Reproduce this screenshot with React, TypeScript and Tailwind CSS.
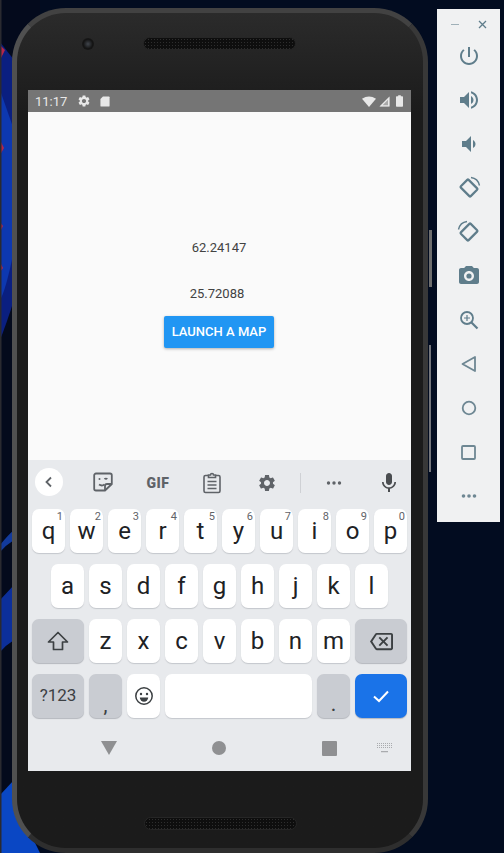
import React from 'react'

const FONT = "font-['Roboto','Liberation_Sans',sans-serif]"

const GEAR =
  'M19.14 12.94c.04-.3.06-.61.06-.94 0-.32-.02-.64-.07-.94l2.03-1.58c.18-.14.23-.41.12-.61l-1.92-3.32c-.12-.22-.37-.29-.59-.22l-2.39.96c-.5-.38-1.03-.7-1.62-.94l-.36-2.54c-.04-.24-.24-.41-.48-.41h-3.84c-.24 0-.43.17-.47.41l-.36 2.54c-.59.24-1.13.57-1.62.94l-2.39-.96c-.22-.08-.47 0-.59.22L2.74 8.87c-.12.21-.08.47.12.61l2.03 1.58c-.05.3-.09.63-.09.94s.02.64.07.94l-2.03 1.58c-.18.14-.23.41-.12.61l1.92 3.32c.12.22.37.29.59.22l2.39-.96c.5.38 1.03.7 1.62.94l.36 2.54c.05.24.24.41.48.41h3.84c.24 0 .44-.17.47-.41l.36-2.54c.59-.24 1.13-.56 1.62-.94l2.39.96c.22.08.47 0 .59-.22l1.92-3.32c.12-.22.07-.47-.12-.61l-2.01-1.58zM12 15.6c-1.98 0-3.6-1.62-3.6-3.6s1.62-3.6 3.6-3.6 3.6 1.62 3.6 3.6-1.62 3.6-3.6 3.6z'

const Icon = ({ d, size = 24, className = '' }: { d: string; size?: number; className?: string }) => (
  <svg width={size} height={size} viewBox="0 0 24 24" fill="currentColor" fillRule="evenodd" className={className}>
    <path d={d} />
  </svg>
)

const Key = ({ label, num }: { label: string; num?: string }) => (
  <div className="relative flex-1 h-[44px] bg-white rounded-[7px] shadow-[0_1px_1px_#c4c7cc] flex items-center justify-center text-[24px] leading-none text-[#202124]">
    {label}
    {num && <span className="absolute top-[1px] right-[2px] text-[11px] leading-[13px] text-[#5f6368]">{num}</span>}
  </div>
)

const FnKey = ({ children, w }: { children: React.ReactNode; w: string }) => (
  <div className={`${w} h-[44px] shrink-0 bg-[#c9ccd2] rounded-[7px] shadow-[0_1px_1px_#b4b7bd] flex items-center justify-center text-[#3c4043]`}>
    {children}
  </div>
)

const SideBtn = ({ children }: { children: React.ReactNode }) => (
  <div className="h-[44px] flex items-center justify-center text-[#5f7d8b]">{children}</div>
)

const Speaker = () => (
  <div className="w-[153px] h-[13px] rounded-full bg-[#0e0e0e] bg-[radial-gradient(#2e2e2e_0.7px,transparent_0.8px)] bg-[length:3px_3px] border border-[#262626]" />
)

const App = () => {
  return (
    <div className={`relative w-[504px] h-[853px] overflow-hidden bg-[#020c20] flex items-start pl-[12px] pt-[8px] ${FONT}`}>
      {/* Desktop wallpaper behind the emulator */}
      <svg className="absolute left-0 top-0" width="40" height="853" viewBox="0 0 40 853">
        <rect width="40" height="853" fill="#040a1c" />
        <path d="M0 42 L14 60 L14 300 Q6 325 0 340 Z" fill="#0a1f80" />
        <path d="M0 90 L14 130 L14 250 Q6 290 0 300 Z" fill="#0d38b0" />
        <path d="M0 45 L5 50 L0 60 Z M0 140 L4 148 L0 155 Z M0 222 L3 226 L0 232 Z M0 262 L3 268 L0 272 Z" fill="#b5264a" />
        <path d="M0 545 Q8 535 14 530 L14 540 Q6 545 0 552 Z" fill="#123a9c" />
        <path d="M0 600 L14 585 L14 640 Q6 645 0 652 Z" fill="#0c2f9a" />
        <path d="M0 795 L14 780 L14 853 L0 853 Z" fill="#0a47c4" />
        <path d="M14 800 L40 853 L14 853 Z" fill="#0a47c4" />
        <rect width="1.5" height="853" fill="#2a2a30" />
      </svg>

      {/* Phone side buttons */}
      <div className="absolute left-[429px] top-[230px] w-[3px] h-[57px] bg-[#6e6e6e]" />
      <div className="absolute left-[429px] top-[345px] w-[2px] h-[127px] bg-[#74767c]" />

      {/* Phone */}
      <div className="relative shrink-0 w-[416px] h-[845px] rounded-[54px] border-[5px] border-l-[#505050] border-r-[#383838] border-t-[#424242] border-b-[#2e2e2e] bg-[#1c1c1c] bg-gradient-to-b from-[#2b2b2b] to-[#1b1b1b] to-[12%] flex flex-col pl-[11px]">
        <div className="h-[77px] shrink-0 flex items-start pt-[24px]">
          <div className="w-[12px] h-[12px] mt-[1px] ml-[54px] mr-[49px] rounded-full bg-[radial-gradient(#3a3e44_8%,#141414_55%,#1c1c1c)]" />
          <Speaker />
        </div>

        <div className="w-[383px] h-[681px] shrink-0 flex flex-col bg-[#fafafa]">
          {/* Status bar */}
          <div className="h-[22px] shrink-0 bg-[#757575] flex items-center pl-[7px] pr-[8px] text-[#e8e8e8]">
            <span className="text-[13px] leading-none">11:17</span>
            <Icon d={GEAR} size={14} className="ml-[10px]" />
            <svg width="10" height="11" viewBox="0 0 12 13" fill="currentColor" className="ml-[9px]">
              <path d="M3.5 0.5H10.5a1 1 0 0 1 1 1V11.5a1 1 0 0 1-1 1H1.5a1 1 0 0 1-1-1V3.5Z" />
            </svg>
            <div className="flex-1" />
            <svg width="14" height="11" viewBox="0 0 14 11" fill="currentColor">
              <path d="M0 2.8 Q7 -1.8 14 2.8 L7 11 Z" />
            </svg>
            <svg width="12" height="11" viewBox="0 0 12 11" fill="none" className="ml-[2px]">
              <path d="M11.5 0.5V10.5H1.5Z" fill="#a8a8a8" />
              <path d="M11.5 0.5V10.5H1.5ZM10 3.8V9.2H4.6Z" fill="currentColor" fillRule="evenodd" />
            </svg>
            <svg width="7" height="12" viewBox="0 0 8 13" fill="currentColor" className="ml-[6px]">
              <path d="M2.5 0H5.5V1.2H7.2a.8.8 0 0 1 .8.8V12.2a.8.8 0 0 1-.8.8H.8a.8.8 0 0 1-.8-.8V2a.8.8 0 0 1 .8-.8H2.5Z" />
            </svg>
          </div>

          {/* App content */}
          <div className="h-[348px] shrink-0 flex flex-col items-center pt-[126px] pr-[1px] text-[13px] leading-[20px] text-[#424242]">
            <span>62.24147</span>
            <span className="mt-[26px] mr-[4px]">25.72088</span>
            <button className="mt-[12px] w-[110px] h-[32px] rounded-[2px] bg-[#2196f3] text-white text-[13px] font-medium shadow-[0_1px_3px_rgba(0,0,0,0.3)]">
              LAUNCH A MAP
            </button>
          </div>

          {/* Keyboard */}
          <div className="flex-1 bg-[#e8eaed] flex flex-col px-[4px]">
            <div className="h-[49px] shrink-0 relative text-[#5f6368]">
              <div className="absolute left-[3px] top-[8px] w-[28px] h-[28px] rounded-full bg-white flex items-center justify-center">
                <svg width="12" height="12" viewBox="0 0 12 12" fill="none" stroke="#5f6368" strokeWidth="1.8">
                  <path d="M8 1.5 3.5 6 8 10.5" />
                </svg>
              </div>
              <div className="flex h-full items-center pl-[60px] pb-[4px]">
                <svg width="22" height="22" viewBox="0 0 22 22" fill="none" stroke="currentColor" strokeWidth="1.8" className="-mt-[1px]">
                  <path d="M4 2.5H18a1.8 1.8 0 0 1 1.8 1.8V13L13 19.5H4a1.8 1.8 0 0 1-1.8-1.8V4.3A1.8 1.8 0 0 1 4 2.5Z" />
                  <path d="M13 19.5V15a2 2 0 0 1 2-2h4.8" />
                  <path d="M7 13.5c2 1.3 4 1.2 5.5-.2" />
                  <circle cx="7.5" cy="8" r="1" fill="currentColor" stroke="none" />
                  <path d="M12.5 8.2c.8-.9 2-.9 2.8 0" />
                </svg>
                <span className="ml-[31px] w-[26px] text-center text-[14px] font-black tracking-[0.6px] leading-none">GIF</span>
                <svg width="20" height="22" viewBox="0 0 20 22" fill="none" stroke="currentColor" strokeWidth="1.6" className="ml-[31px]">
                  <path d="M6 3.5H3.5a1.5 1.5 0 0 0-1.5 1.5V19a1.5 1.5 0 0 0 1.5 1.5H16.5A1.5 1.5 0 0 0 18 19V5a1.5 1.5 0 0 0-1.5-1.5H14" />
                  <path d="M6.5 5.5V3h2a1.5 1.5 0 0 1 3 0h2v2.5Z" />
                  <path d="M5.5 9.5h9M5.5 13h9M5.5 16.5h9" />
                </svg>
                <Icon d={GEAR} size={20} className="ml-[35px]" />
                <div className="ml-[23px] w-px h-[20px] bg-[#cfd1d5]" />
                <svg width="16" height="4" viewBox="0 0 16 4" fill="currentColor" className="ml-[25px]">
                  <circle cx="2.5" cy="2" r="1.7" />
                  <circle cx="8" cy="2" r="1.7" />
                  <circle cx="13.5" cy="2" r="1.7" />
                </svg>
                <Icon d="M12 14c1.66 0 3-1.34 3-3V5c0-1.66-1.34-3-3-3S9 3.34 9 5v6c0 1.66 1.34 3 3 3zm5.3-3c0 3-2.54 5.3-5.3 5.3S6.7 14 6.7 11H5c0 3.41 2.72 6.23 6 6.72V21h2v-3.28c3.28-.48 6-3.3 6-6.72h-1.7z" size={24} className="ml-[35px] text-[#4a4d50]" />
              </div>
            </div>

            <div className="flex flex-col gap-[11px]">
              <div className="flex gap-[5px]">
                {'qwertyuiop'.split('').map((c, i) => (
                  <Key key={c} label={c} num={String((i + 1) % 10)} />
                ))}
              </div>
              <div className="flex gap-[5px] px-[19px]">
                {'asdfghjkl'.split('').map(c => (
                  <Key key={c} label={c} />
                ))}
              </div>
              <div className="flex gap-[5px]">
                <FnKey w="w-[52px]">
                  <svg width="22" height="22" viewBox="0 0 22 22" fill="none" stroke="#3c4043" strokeWidth="1.7" strokeLinejoin="round">
                    <path d="M11 2.5 20.5 12H15.5V19.5H6.5V12H1.5Z" />
                  </svg>
                </FnKey>
                {'zxcvbnm'.split('').map(c => (
                  <Key key={c} label={c} />
                ))}
                <FnKey w="w-[52px]">
                  <Icon d="M22 3H7c-.69 0-1.23.35-1.59.88L0 12l5.41 8.11c.36.53.9.89 1.59.89h15c1.1 0 2-.9 2-2V5c0-1.1-.9-2-2-2zm0 16H7.07L2.4 12l4.66-7H22v14zM10.41 17L14 13.41 17.59 17 19 15.59 15.41 12 19 8.41 17.59 7 14 10.59 10.41 7 9 8.41 12.59 12 9 15.59z" size={23} />
                </FnKey>
              </div>
              <div className="flex gap-[5px]">
                <FnKey w="w-[52px]">
                  <span className="text-[17px]">?123</span>
                </FnKey>
                <FnKey w="w-[33px]">
                  <span className="text-[18px] font-medium leading-none mt-[20px]">,</span>
                </FnKey>
                <div className="w-[33px] h-[44px] shrink-0 bg-white rounded-[7px] shadow-[0_1px_1px_#c4c7cc] flex items-center justify-center">
                  <svg width="20" height="20" viewBox="0 0 20 20" fill="none" stroke="#3c4043" strokeWidth="1.5">
                    <circle cx="10" cy="10" r="8.2" />
                    <circle cx="7" cy="8" r="1.2" fill="#3c4043" stroke="none" />
                    <circle cx="13" cy="8" r="1.2" fill="#3c4043" stroke="none" />
                    <path d="M5.8 11.5h8.4a4.2 4.2 0 0 1-8.4 0Z" fill="#3c4043" stroke="none" />
                  </svg>
                </div>
                <div className="flex-1 h-[44px] bg-white rounded-[7px] shadow-[0_1px_1px_#c4c7cc]" />
                <FnKey w="w-[33px]">
                  <span className="text-[18px] font-medium leading-none mt-[18px]">.</span>
                </FnKey>
                <div className="w-[52px] h-[44px] shrink-0 bg-[#1a73e8] rounded-[7px] shadow-[0_1px_1px_#b4b7bd] flex items-center justify-center">
                  <svg width="18" height="18" viewBox="0 0 18 18" fill="none" stroke="white" strokeWidth="2">
                    <path d="M2 9.5 7 14 16 4.5" />
                  </svg>
                </div>
              </div>
            </div>

            {/* Navigation bar */}
            <div className="flex-1 flex items-center pt-[7px] text-[#8f9092]">
              <svg width="16" height="14" viewBox="0 0 16 14" fill="currentColor" className="ml-[69px]">
                <path d="M0 0H16L8 14Z" />
              </svg>
              <div className="ml-[95px] w-[14px] h-[14px] rounded-full bg-[#8f9092]" />
              <div className="ml-[96px] w-[15px] h-[15px] bg-[#8f9092] rounded-[1px]" />
              <svg width="15" height="10" viewBox="0 0 15 10" fill="#a9abae" className="ml-[40px]">
                <path d="M0 0h1v1H0zM2 0h1v1H2zM4 0h1v1H4zM6 0h1v1H6zM8 0h1v1H8zM10 0h1v1h-1zM12 0h1v1h-1zM14 0h1v1h-1zM0 2h1v1H0zM2 2h1v1H2zM4 2h1v1H4zM6 2h1v1H6zM8 2h1v1H8zM10 2h1v1h-1zM12 2h1v1h-1zM14 2h1v1h-1zM0 4h1v1H0zM2 4h1v1H2zM4 4h1v1H4zM6 4h1v1H6zM8 4h1v1H8zM10 4h1v1h-1zM12 4h1v1h-1zM14 4h1v1h-1zM4 8h7v1.2H4z" />
              </svg>
            </div>
          </div>
        </div>

        <div className="mt-[46px] ml-[116px]">
          <Speaker />
        </div>
      </div>

      {/* Emulator toolbar */}
      <div className="relative shrink-0 ml-[9px] mt-[1px] w-[63px] h-[513px] bg-[#f0f1f2] flex flex-col">
        <div className="h-[25px] pt-[6px] flex items-center justify-between pl-[14px] pr-[13px] text-[#7f98a3]">
          <div className="w-[8px] h-[1.5px] bg-[#9fb0b8]" />
          <svg width="9" height="9" viewBox="0 0 9 9" stroke="#5f7d8b" strokeWidth="1.3">
            <path d="M1 1 8 8M8 1 1 8" />
          </svg>
        </div>
        <SideBtn>
          <Icon d="M13 3h-2v10h2V3zm4.83 2.17l-1.42 1.42C17.99 7.86 19 9.81 19 12c0 3.87-3.13 7-7 7s-7-3.13-7-7c0-2.19 1.01-4.14 2.58-5.42L6.17 5.17C4.23 6.82 3 9.26 3 12c0 4.97 4.03 9 9 9s9-4.03 9-9c0-2.74-1.23-5.18-3.17-6.83z" size={24} />
        </SideBtn>
        <SideBtn>
          <Icon d="M3 9v6h4l5 5V4L7 9H3zm13.5 3c0-1.77-1.02-3.29-2.5-4.03v8.05c1.48-.73 2.5-2.25 2.5-4.02zM14 3.23v2.06c2.89.86 5 3.54 5 6.71s-2.11 5.85-5 6.71v2.06c4.01-.91 7-4.49 7-8.77s-2.99-7.86-7-8.77z" size={24} />
        </SideBtn>
        <SideBtn>
          <Icon d="M18.5 12c0-1.77-1.02-3.29-2.5-4.03v8.05c1.48-.73 2.5-2.25 2.5-4.02zM5 9v6h4l5 5V4L9 9H5z" size={24} />
        </SideBtn>
        <SideBtn>
          <svg width="24" height="24" viewBox="0 0 24 24" fill="none" stroke="currentColor" strokeWidth="2.2" strokeLinejoin="round">
            <rect x="5" y="6.5" width="14" height="11" rx="1" transform="rotate(45 12 12)" />
            <path d="M14 1.5c4 .5 7.5 3.5 8.5 8" strokeWidth="1.4" />
          </svg>
        </SideBtn>
        <SideBtn>
          <svg width="24" height="24" viewBox="0 0 24 24" fill="none" stroke="currentColor" strokeWidth="2.2" strokeLinejoin="round">
            <rect x="5" y="6.5" width="14" height="11" rx="1" transform="rotate(-45 12 12)" />
            <path d="M10 1.5c-4 .5-7.5 3.5-8.5 8" strokeWidth="1.4" />
          </svg>
        </SideBtn>
        <SideBtn>
          <svg width="24" height="24" viewBox="0 0 24 24" fill="currentColor">
            <path fillRule="evenodd" d="M9 2L7.17 4H4c-1.1 0-2 .9-2 2v12c0 1.1.9 2 2 2h16c1.1 0 2-.9 2-2V6c0-1.1-.9-2-2-2h-3.17L15 2H9zm3 15c-2.76 0-5-2.24-5-5s2.24-5 5-5 5 2.24 5 5-2.24 5-5 5z" />
            <circle cx="12" cy="12" r="2.6" />
          </svg>
        </SideBtn>
        <SideBtn>
          <svg width="20" height="20" viewBox="0 0 20 20" fill="none" stroke="currentColor" strokeWidth="1.8">
            <circle cx="8" cy="8" r="6" />
            <path d="M12.5 12.5 18.5 18.5" strokeWidth="2.2" />
            <path d="M8 5v6M5 8h6" strokeWidth="1.2" />
          </svg>
        </SideBtn>
        <SideBtn>
          <svg width="16" height="18" viewBox="0 0 16 18" fill="none" stroke="currentColor" strokeWidth="1.8" strokeLinejoin="round" className="text-[#6e8793]">
            <path d="M14 2V16L1.5 9Z" />
          </svg>
        </SideBtn>
        <SideBtn>
          <svg width="16" height="16" viewBox="0 0 16 16" fill="none" stroke="currentColor" strokeWidth="1.8" className="text-[#6e8793]">
            <circle cx="8" cy="8" r="6.3" />
          </svg>
        </SideBtn>
        <SideBtn>
          <svg width="15" height="15" viewBox="0 0 15 15" fill="none" stroke="currentColor" strokeWidth="1.8" className="text-[#6e8793]">
            <rect x="1" y="1" width="13" height="13" rx="1" />
          </svg>
        </SideBtn>
        <SideBtn>
          <svg width="16" height="4" viewBox="0 0 16 4" fill="currentColor" className="text-[#6e8793]">
            <circle cx="2.5" cy="2" r="1.8" />
            <circle cx="8" cy="2" r="1.8" />
            <circle cx="13.5" cy="2" r="1.8" />
          </svg>
        </SideBtn>
      </div>
    </div>
  )
}

export default App
